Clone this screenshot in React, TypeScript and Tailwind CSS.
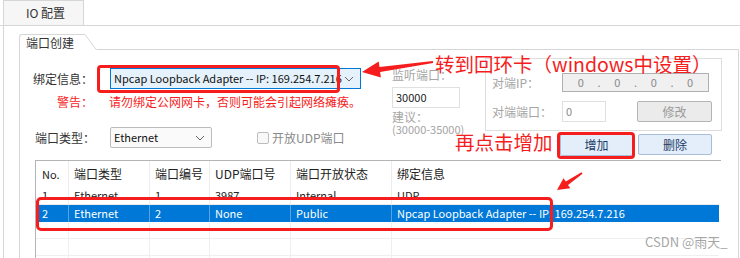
import React from "react";

const red = "#f51d1d";

function Chevron({ className }: { className?: string }) {
  return (
    <svg width="10" height="6" viewBox="0 0 10 6" className={className}>
      <path d="M1 1l4 4 4-4" fill="none" stroke="#666" strokeWidth="1" />
    </svg>
  );
}

const rows = [
  ["1", "Ethernet", "1", "3987", "Internal", "UDP"],
  ["2", "Ethernet", "2", "None", "Public", "Npcap Loopback Adapter -- IP: 169.254.7.216"],
];

export default function App() {
  return (
    <div className="relative w-[740px] h-[258px] overflow-hidden bg-white text-[12px] text-[#222] font-['Noto_Sans_CJK_SC','Noto_Sans',sans-serif]">
      {/* tab strip */}
      <div className="flex h-[26px] items-end border-b border-[#d6d6d6]">
        <div className="ml-[3px] flex h-[25px] w-[81px] items-center border border-b-0 border-[#d6d6d6] bg-[#f6f6f6] pl-[22px] text-[#333]">
          IO 配置
        </div>
      </div>

      {/* tab page */}
      <div className="ml-[3px] h-[232px] border-l border-[#d6d6d6] pl-[15px] pt-[8px]">
        {/* group box header */}
        <div className="flex h-[16px] w-[720px] items-end">
          <div className="flex h-[16px] w-[66px] items-center rounded-tl-[3px] border-l border-t border-[#d6d6d6] pl-[6px] text-[#333]">
            端口创建
          </div>
          <svg width="12" height="16" viewBox="0 0 12 16" className="block">
            <path d="M0 0.5L11.5 16" stroke="#d6d6d6" fill="none" />
          </svg>
          <div className="h-px flex-1 bg-[#d6d6d6]" />
        </div>

        {/* group box body */}
        <div className="h-[210px] w-[720px] border-l border-r border-[#d6d6d6]">
          <div className="flex h-[106px] items-start">
            {/* left column */}
            <div className="w-[341px] shrink-0 pl-[13px] pt-[18px]">
              <div className="flex h-[21px] items-center">
                <span className="w-[77px] text-[#333]">绑定信息：</span>
                <div className="flex h-[21px] w-[251px] items-center justify-between border border-[#0078d7] bg-[#e5f1fb] pl-[3px] pr-[6px]">
                  <span className="whitespace-nowrap text-[11px] text-[#111]">Npcap Loopback Adapter -- IP: 169.254.7.216</span>
                  <Chevron />
                </div>
              </div>
              <div className="mt-[6px] flex h-[14px] items-center whitespace-nowrap text-[#f51d1d]">
                <span className="ml-[24px] w-[53px]">警告：</span>
                <span>请勿绑定公网网卡，否则可能会引起网络瘫痪。</span>
              </div>
              <div className="mt-[18px] flex h-[21px] items-center">
                <span className="ml-[2px] w-[75px] text-[#333]">端口类型：</span>
                <div className="flex h-[21px] w-[102px] items-center justify-between rounded-[2px] border border-[#bcbcbc] bg-[#fafafa] pl-[3px] pr-[6px]">
                  <span className="text-[11px] text-[#111]">Ethernet</span>
                  <Chevron />
                </div>
                <div className="ml-[45px] h-[12px] w-[12px] rounded-[2px] border border-[#bdbdbd] bg-[#f8f8f8]" />
                <span className="ml-[3px] whitespace-nowrap text-[#8a8a8a]">开放UDP端口</span>
              </div>
            </div>

            {/* middle column */}
            <div className="ml-[31px] w-[68px] shrink-0 pt-[18px] text-[#a5a5a5]">
              <div className="h-[14px] whitespace-nowrap leading-[14px]">监听端口：</div>
              <div className="mt-[5px] flex h-[21px] w-[68px] items-center border border-[#e0e0e0] pl-[3px] text-[11px] text-[#222]">
                30000
              </div>
              <div className="mt-[3px] leading-[12px]">建议：</div>
              <div className="whitespace-nowrap text-[11px] leading-[12px]">(30000-35000)</div>
            </div>

            {/* right column */}
            <div className="ml-[25px] shrink-0 pt-[8px]">
              <div className="h-[73px] w-[237px] border border-[#dedede] pl-[6px] pt-[14px] text-[#a5a5a5]">
                <div className="flex h-[19px] items-center">
                  <span className="w-[70px]">对端IP：</span>
                  <div className="flex h-[19px] w-[147px] items-center justify-around border border-[#b0b0b0] bg-[#f0f0f0] px-[8px] text-[11px] text-[#8a8a8a]">
                    <span>0</span><span>.</span><span>0</span><span>.</span><span>0</span><span>.</span><span>0</span>
                  </div>
                </div>
                <div className="mt-[9px] flex h-[21px] items-center">
                  <span className="w-[70px]">对端端口：</span>
                  <div className="flex h-[21px] w-[44px] items-center border border-[#e0e0e0] pl-[3px] text-[11px] text-[#8a8a8a]">0</div>
                  <div className="ml-[31px] flex h-[21px] w-[75px] items-center justify-center rounded-[2px] border border-[#b5b5b5] bg-[#ebebeb] text-[#9a9a9a]">
                    修改
                  </div>
                </div>
              </div>
              <div className="mt-[3px] flex items-start pl-[75px]">
                <div className="flex h-[22px] w-[73px] items-center justify-center rounded-[2px] border border-[#a9bdd6] bg-[#e3eefa] text-[#1c3a66]">
                  增加
                </div>
                <div className="ml-[5px] flex h-[21px] w-[74px] items-center justify-center rounded-[2px] border border-[#a9bdd6] bg-[#e3eefa] text-[#1c3a66]">
                  删除
                </div>
              </div>
            </div>
          </div>

          {/* table */}
          <div className="ml-[15px] mt-[4px] h-[110px] w-[686px] border border-r-0 border-[#b4b4b4]">
            <div className="grid h-[26px] grid-cols-[32px_81px_60px_81px_101px_1fr] items-center text-[#222]">
              <span className="pl-[6px] text-[11px]">No.</span>
              <span className="h-full border-l border-[#ececec] pl-[5px] leading-[26px]">端口类型</span>
              <span className="h-full border-l border-[#ececec] pl-[5px] leading-[26px]">端口编号</span>
              <span className="h-full border-l border-[#ececec] pl-[5px] leading-[26px]">UDP端口号</span>
              <span className="h-full border-l border-[#ececec] pl-[5px] leading-[26px]">端口开放状态</span>
              <span className="h-full border-l border-[#ececec] pl-[5px] leading-[26px]">绑定信息</span>
            </div>
            {rows.map((r, i) => {
              const sel = i === 1;
              return (
                <div
                  key={i}
                  className={
                    sel
                      ? "mr-[2px] grid h-[17px] grid-cols-[32px_81px_60px_81px_101px_1fr] bg-[#0078d7] text-[11px] text-white leading-[17px]"
                      : "mr-[2px] grid h-[18px] grid-cols-[32px_81px_60px_81px_101px_1fr] border-b border-[#ececec] text-[11px] text-[#222] leading-[17px]"
                  }
                >
                  {r.map((c, j) => (
                    <span
                      key={j}
                      className={
                        j === 0
                          ? "pl-[6px]"
                          : sel
                          ? "border-l border-[#5aa2e3] pl-[5px] whitespace-nowrap"
                          : "border-l border-[#ececec] pl-[5px] whitespace-nowrap"
                      }
                    >
                      {c}
                    </span>
                  ))}
                </div>
              );
            })}
            {[0, 1, 2].map((k) => (
              <div key={k} className="mr-[2px] grid h-[17px] grid-cols-[32px_81px_60px_81px_101px_1fr] border-b border-[#efefef]">
                <span />
                <span className="border-l border-[#efefef]" />
                <span className="border-l border-[#efefef]" />
                <span className="border-l border-[#efefef]" />
                <span className="border-l border-[#efefef]" />
                <span className="border-l border-[#efefef]" />
              </div>
            ))}
          </div>
        </div>
      </div>

      {/* annotations */}
      <div className="pointer-events-none absolute left-[97px] top-[65px] h-[28px] w-[243px] rounded-[4px] border-[3px] border-[#f51d1d]" />
      <div className="pointer-events-none absolute left-[557px] top-[132px] h-[27px] w-[78px] rounded-[4px] border-[3px] border-[#f51d1d]" />
      <div className="pointer-events-none absolute left-[36px] top-[197px] h-[34px] w-[517px] rounded-[5px] border-[3px] border-[#f51d1d]" />
      <svg className="pointer-events-none absolute left-0 top-0" width="740" height="258">
        <polygon
          fill={red}
          points="362,72 378.7,61.6 379.5,67 432.9,61 433.1,63 380.1,72 380.9,77.4"
        />
        <polygon
          fill={red}
          points="557,190 563.5,178.2 565.8,181.5 581.5,172.3 582.5,173.7 568,184.9 570.3,188.2"
        />
      </svg>
      <div className="absolute left-[435px] top-[53px] whitespace-nowrap text-[19.5px] leading-[22px] text-[#f51d1d]">
        转到回环卡（windows中设置）
      </div>
      <div className="absolute left-[455px] top-[131px] text-[19.5px] leading-[22px] text-[#f51d1d]">
        再点击增加
      </div>
      <div className="absolute left-[645px] top-[234px] text-[13px] leading-[16px] text-[#9a9a9a]/90">
        CSDN @雨天_
      </div>
    </div>
  );
}
